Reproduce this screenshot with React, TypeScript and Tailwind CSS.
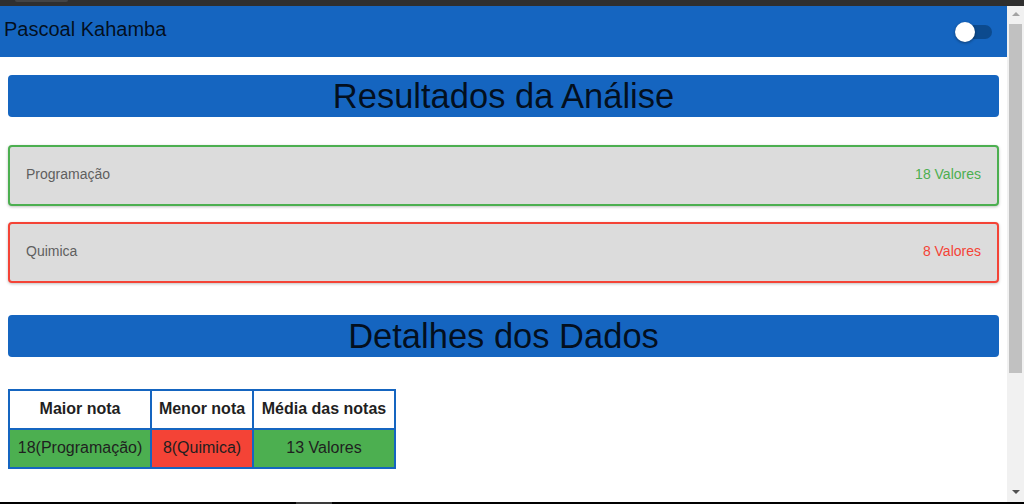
import React from 'react';

const subjects = [
  { name: 'Programação', value: 18, border: 'border-[#4caf50]', text: 'text-[#4caf50]' },
  { name: 'Quimica', value: 8, border: 'border-[#f44336]', text: 'text-[#f44336]' },
];

const SectionTitle: React.FC<{ children: React.ReactNode }> = ({ children }) => (
  <h1 className="h-[42px] rounded-[4px] bg-[#1565c0] text-center text-[34.5px] leading-[42px] text-black/85">
    {children}
  </h1>
);

const ResultCard: React.FC<{ name: string; value: number; border: string; text: string }> = ({
  name,
  value,
  border,
  text,
}) => (
  <div
    className={`flex h-[61px] items-center justify-between rounded-[4px] border-2 ${border} bg-[#dcdcdc] px-4 pb-[3px] text-[14px] shadow-[0_1px_3px_rgba(0,0,0,0.25)]`}
  >
    <span className="text-[#5f5f5f]">{name}</span>
    <span className={text}>{value} Valores</span>
  </div>
);

export default function App() {
  return (
    <div className="flex h-[504px] w-[1024px] flex-col overflow-hidden bg-white font-['Liberation_Sans',Arial,sans-serif]">
      {/* browser top strip */}
      <div className="h-[6px] shrink-0 bg-[#2f2f2f] pl-[15px]">
        <div className="h-[2px] w-[53px] rounded-b-[3px] bg-[#444]" />
      </div>

      <div className="flex min-h-0 flex-1">
        {/* page */}
        <div className="flex min-w-0 flex-1 flex-col">
          <header className="flex h-[51px] shrink-0 items-start justify-between bg-[#1565c0] pl-1 pr-[15px] pt-[11px]">
            <span className="text-[20px] leading-[24px] text-black/85">Pascoal Kahamba</span>
            <div className="relative mt-[8px] h-[14px] w-[37px]">
              <div className="absolute inset-0 rounded-full bg-[#0c4a8e]" />
              <div className="absolute left-0 top-[-3px] h-[20px] w-[20px] rounded-full bg-white shadow-[0_1px_3px_rgba(0,0,0,0.4)]" />
            </div>
          </header>

          <main className="flex flex-col px-2">
            <div className="mt-[18px]">
              <SectionTitle>Resultados da Análise</SectionTitle>
            </div>

            <div className="mt-[28px] flex flex-col gap-4">
              {subjects.map((s) => (
                <ResultCard key={s.name} {...s} />
              ))}
            </div>

            <div className="mt-[32px]">
              <SectionTitle>Detalhes dos Dados</SectionTitle>
            </div>

            <table className="mt-[32px] w-[386px] table-fixed border-collapse border-2 border-[#1565c0] text-[16px] text-[#1f1f1f]">
              <thead>
                <tr className="h-[39px]">
                  <th className="w-[142px] border-2 border-[#1565c0] px-0 pb-[1px] font-bold">Maior nota</th>
                  <th className="w-[102px] border-2 border-[#1565c0] px-0 pb-[1px] font-bold">Menor nota</th>
                  <th className="w-[142px] border-2 border-[#1565c0] px-0 pb-[1px] font-bold">Média das notas</th>
                </tr>
              </thead>
              <tbody>
                <tr className="h-[39px]">
                  <td className="border-2 border-[#1565c0] bg-[#4caf50] pb-[1px] text-center">18(Programação)</td>
                  <td className="border-2 border-[#1565c0] bg-[#f44336] pb-[1px] text-center">8(Quimica)</td>
                  <td className="border-2 border-[#1565c0] bg-[#4caf50] pb-[1px] text-center">13 Valores</td>
                </tr>
              </tbody>
            </table>
          </main>
        </div>

        {/* scrollbar */}
        <div className="flex w-[17px] shrink-0 flex-col items-center bg-[#f1f1f1]">
          <div className="mt-[6px] h-0 w-0 border-x-[4px] border-b-[4px] border-x-transparent border-b-[#a3a3a3]" />
          <div className="mt-[8px] h-[349px] w-[13px] bg-[#c1c1c1]" />
          <div className="flex-1" />
          <div className="mb-[8px] h-0 w-0 border-x-[4px] border-t-[4px] border-x-transparent border-t-[#505050]" />
        </div>
      </div>

      {/* browser bottom strip */}
      <div className="flex h-[2px] shrink-0 bg-black pl-[296px]">
        <div className="h-full w-[36px] bg-[#3a3a3a]" />
      </div>
    </div>
  );
}
